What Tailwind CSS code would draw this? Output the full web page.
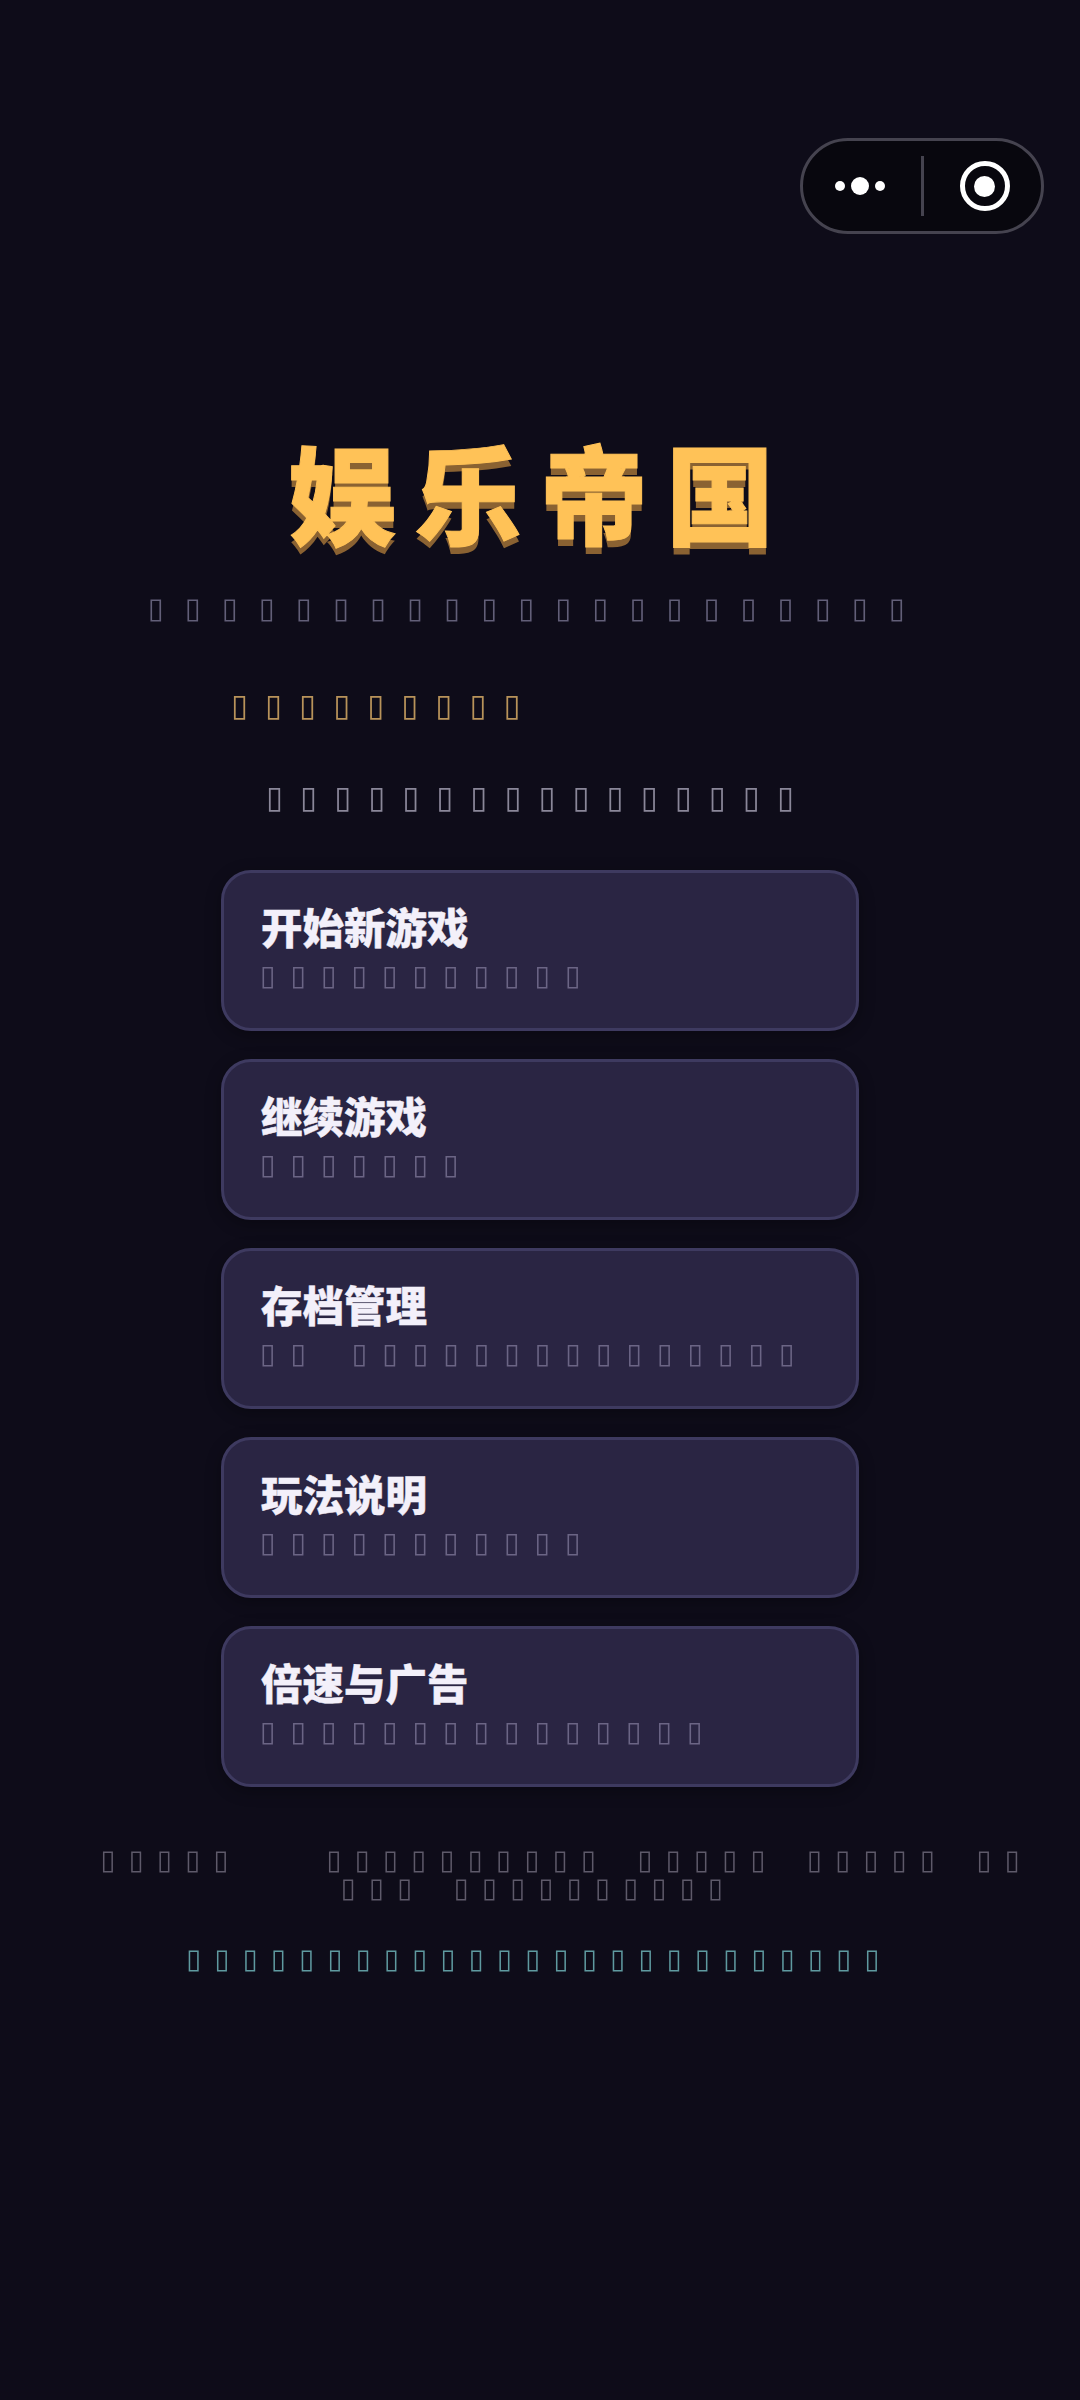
<!DOCTYPE html>
<html lang="zh">
<head>
<meta charset="UTF-8" />
<script src="https://cdn.jsdelivr.net/npm/@tailwindcss/browser@4"></script>
<title>娱乐帝国</title>
</head>
<body class="bg-[#0e0c19] w-[1080px] h-[2400px] overflow-hidden font-['DejaVu_Sans',sans-serif]">
  <div class="h-[138px]"></div>
  <!-- 胶囊按钮 -->
  <div class="flex justify-end pr-[36px]">
    <div class="w-[244px] h-[96px] rounded-full border-[3px] border-[#45434f] bg-[#08070e] flex items-center">
      <div class="w-[118px] flex items-center justify-center gap-[6px] pr-[4px]">
        <span class="w-[10px] h-[10px] rounded-full bg-white"></span>
        <span class="w-[18px] h-[18px] rounded-full bg-white"></span>
        <span class="w-[10px] h-[10px] rounded-full bg-white"></span>
      </div>
      <div class="w-[3px] h-[60px] bg-[#45434f]"></div>
      <div class="flex-1 flex items-center justify-center pl-[4px]">
        <div class="w-[50px] h-[50px] rounded-full border-[5px] border-white flex items-center justify-center">
          <span class="w-[21px] h-[21px] rounded-full bg-white"></span>
        </div>
      </div>
    </div>
  </div>

  <h1 class="mt-[186px] text-center text-[108px] leading-[140px] font-black tracking-[18px] text-[#ffc257] [-webkit-text-stroke:1px_#ffc257] [text-shadow:0_7px_0_#8a6232] font-['Noto_Sans_CJK_SC',sans-serif]">娱乐帝国</h1>

  <p class="will-change-transform mt-[28px] pr-[6px] text-center text-[29px] leading-[40px] tracking-[21.1px] text-[#625f78]">▯▯▯▯▯▯▯▯▯▯▯▯▯▯▯▯▯▯▯▯▯</p>
  <p class="will-change-transform mt-[57px] pl-[231px] text-[31px] leading-[40px] tracking-[17px] text-[#b8935a]">▯▯▯▯▯▯▯▯▯</p>
  <p class="will-change-transform mt-[52px] pr-[3px] text-center text-[31px] leading-[40px] tracking-[17px] text-[#8a8799]">▯▯▯▯▯▯▯▯▯▯▯▯▯▯▯▯</p>

  <div class="mt-[53px] mx-[221px] flex flex-col gap-[28px]">
    <div class="h-[161px] rounded-[30px] border-[3px] border-[#3e3a60] bg-[#2a2543] pt-[25px] pl-[37px] shadow-[0_4px_16px_rgba(0,0,0,0.3)]">
      <div class="text-[41.5px] leading-[56px] font-black text-[#f3f0fa] [-webkit-text-stroke:0.4px_#f3f0fa] font-['Noto_Sans_CJK_SC',sans-serif]">开始新游戏</div>
      <div class="will-change-transform mt-[4px] -ml-[1px] text-[28px] leading-[36px] tracking-[15.1px] whitespace-pre text-[#6b6585]">▯▯▯▯▯▯▯▯▯▯▯</div>
    </div>
    <div class="h-[161px] rounded-[30px] border-[3px] border-[#3e3a60] bg-[#2a2543] pt-[25px] pl-[37px] shadow-[0_4px_16px_rgba(0,0,0,0.3)]">
      <div class="text-[41.5px] leading-[56px] font-black text-[#f3f0fa] [-webkit-text-stroke:0.4px_#f3f0fa] font-['Noto_Sans_CJK_SC',sans-serif]">继续游戏</div>
      <div class="will-change-transform mt-[4px] -ml-[1px] text-[28px] leading-[36px] tracking-[15.1px] whitespace-pre text-[#6b6585]">▯▯▯▯▯▯▯</div>
    </div>
    <div class="h-[161px] rounded-[30px] border-[3px] border-[#3e3a60] bg-[#2a2543] pt-[25px] pl-[37px] shadow-[0_4px_16px_rgba(0,0,0,0.3)]">
      <div class="text-[41.5px] leading-[56px] font-black text-[#f3f0fa] [-webkit-text-stroke:0.4px_#f3f0fa] font-['Noto_Sans_CJK_SC',sans-serif]">存档管理</div>
      <div class="will-change-transform mt-[4px] -ml-[1px] text-[28px] leading-[36px] tracking-[15.1px] [word-spacing:6.8px] whitespace-pre text-[#6b6585]">▯▯ ▯▯▯▯▯▯▯▯▯▯▯▯▯▯▯</div>
    </div>
    <div class="h-[161px] rounded-[30px] border-[3px] border-[#3e3a60] bg-[#2a2543] pt-[25px] pl-[37px] shadow-[0_4px_16px_rgba(0,0,0,0.3)]">
      <div class="text-[41.5px] leading-[56px] font-black text-[#f3f0fa] [-webkit-text-stroke:0.4px_#f3f0fa] font-['Noto_Sans_CJK_SC',sans-serif]">玩法说明</div>
      <div class="will-change-transform mt-[4px] -ml-[1px] text-[28px] leading-[36px] tracking-[15.1px] whitespace-pre text-[#6b6585]">▯▯▯▯▯▯▯▯▯▯▯</div>
    </div>
    <div class="h-[161px] rounded-[30px] border-[3px] border-[#3e3a60] bg-[#2a2543] pt-[25px] pl-[37px] shadow-[0_4px_16px_rgba(0,0,0,0.3)]">
      <div class="text-[41.5px] leading-[56px] font-black text-[#f3f0fa] [-webkit-text-stroke:0.4px_#f3f0fa] font-['Noto_Sans_CJK_SC',sans-serif]">倍速与广告</div>
      <div class="will-change-transform mt-[4px] -ml-[1px] text-[28px] leading-[36px] tracking-[15.1px] whitespace-pre text-[#6b6585]">▯▯▯▯▯▯▯▯▯▯▯▯▯▯▯</div>
    </div>
  </div>

  <p class="will-change-transform mt-[59px] pr-[3px] text-center text-[27px] leading-[28px] tracking-[13.4px] [word-spacing:6.3px] whitespace-pre text-[#5e5a6a]">  ▯▯▯▯▯   ▯▯▯▯▯▯▯▯▯▯ ▯▯▯▯▯ ▯▯▯▯▯ ▯▯
▯▯▯ ▯▯▯▯▯▯▯▯▯▯</p>
  <p class="will-change-transform mt-[43px] pr-[1px] text-center text-[27px] leading-[28px] tracking-[13.4px] text-[#5f9aa0]">▯▯▯▯▯▯▯▯▯▯▯▯▯▯▯▯▯▯▯▯▯▯▯▯▯</p>
</body>
</html>
